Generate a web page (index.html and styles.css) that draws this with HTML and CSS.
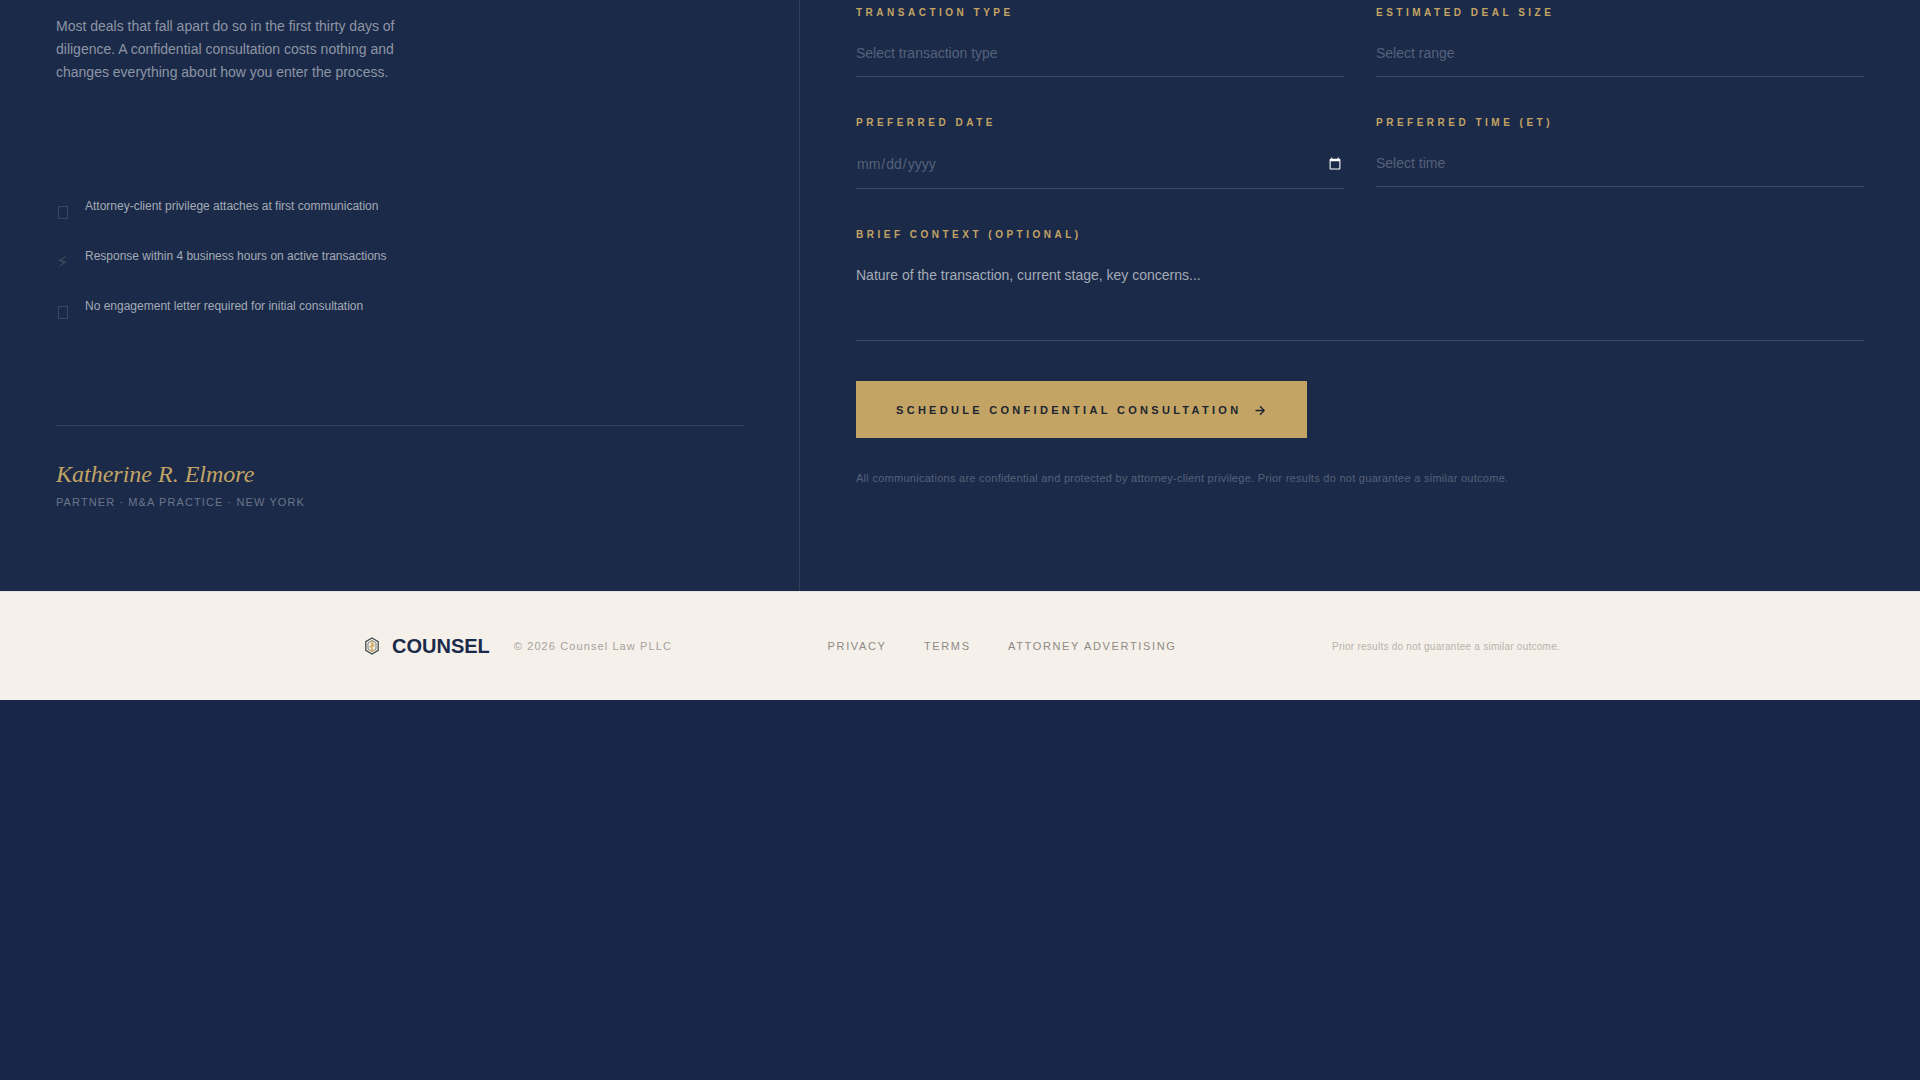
FILE: index.html
```html
<!DOCTYPE html>
<html lang="en">
<head>
    <meta charset="UTF-8">
    <meta name="viewport" content="width=device-width, initial-scale=1.0">
    <title>Counsel</title>
    <link rel="stylesheet" href="styles.css">
</head>
<body>
    <main class="consult">
        <section class="intro">
            <p class="intro-text">Most deals that fall apart do so in the first thirty days of diligence. A confidential consultation costs nothing and changes everything about how you enter the process.</p>
            <ul class="points">
                <li>
                    <svg class="point-icon" viewBox="0 0 14 18" aria-hidden="true"><rect x="2.5" y="3.5" width="9" height="12" /></svg>
                    <span>Attorney-client privilege attaches at first communication</span>
                </li>
                <li>
                    <span class="point-icon bolt" aria-hidden="true">⚡&#xFE0E;</span>
                    <span>Response within 4 business hours on active transactions</span>
                </li>
                <li>
                    <svg class="point-icon" viewBox="0 0 14 18" aria-hidden="true"><rect x="2.5" y="3.5" width="9" height="12" /></svg>
                    <span>No engagement letter required for initial consultation</span>
                </li>
            </ul>
            <div class="signature">
                <p class="sign-name">Katherine R. Elmore</p>
                <p class="sign-role">Partner · M&amp;A Practice · New York</p>
            </div>
        </section>
        <section class="booking">
            <form class="form">
                <div class="field">
                    <label for="type">Transaction Type</label>
                    <select id="type" name="type">
                        <option value="">Select transaction type</option>
                    </select>
                </div>
                <div class="field">
                    <label for="size">Estimated Deal Size</label>
                    <select id="size" name="size">
                        <option value="">Select range</option>
                    </select>
                </div>
                <div class="field">
                    <label for="date">Preferred Date</label>
                    <input type="date" id="date" name="date">
                </div>
                <div class="field">
                    <label for="time">Preferred Time (ET)</label>
                    <select id="time" name="time">
                        <option value="">Select time</option>
                    </select>
                </div>
                <div class="field wide">
                    <label for="context">Brief Context (Optional)</label>
                    <textarea id="context" name="context" placeholder="Nature of the transaction, current stage, key concerns..."></textarea>
                </div>
                <div class="wide">
                    <button type="submit" class="submit">
                        Schedule Confidential Consultation
                        <svg class="arrow" viewBox="0 0 14 14" aria-hidden="true"><path d="M2.500 7.500h8.500M7 3.300l4.200 4.200L7 11.700" /></svg>
                    </button>
                    <p class="note">All communications are confidential and protected by attorney-client privilege. Prior results do not guarantee a similar outcome.</p>
                </div>
            </form>
        </section>
    </main>
    <footer class="footer">
        <div class="footer-inner">
            <div class="brand">
                <svg class="logo" viewBox="0 0 24 20" aria-hidden="true">
                    <path class="logo-hex" d="M12 2l6.200 3.700v8.600L12 18l-6.200-3.700V5.700z" />
                    <path class="logo-inner" d="M12 4.500l4 2.500v6l-4 2.500L8 13V7z" />
                    <path class="logo-mark" d="M12 5v9.500M10 14.500h4M9.500 11l2.500-1 2.500-.5M12 7l1.500 2" />
                </svg>
                <span class="brand-name">COUNSEL</span>
                <span class="copyright">© 2026 Counsel Law PLLC</span>
            </div>
            <nav class="links">
                <a href="#">Privacy</a>
                <span class="dot">·</span>
                <a href="#">Terms</a>
                <span class="dot">·</span>
                <a href="#">Attorney Advertising</a>
            </nav>
            <p class="disclaimer">Prior results do not guarantee a similar outcome.</p>
        </div>
    </footer>
</body>
</html>
```

FILE: styles.css
```css
* {
    box-sizing: border-box;
    margin: 0;
    padding: 0;
}
body {
    background-color: #182648;
    font-family: "Liberation Sans", Arial, sans-serif;
    font-size: 14px;
}
.consult {
    display: grid;
    grid-template-columns: 5fr 7fr;
    background-color: #1b2a49;
}

/* left column */
.intro {
    padding: 15px 55px 81px 56px;
    border-right: 1px solid #313f5c;
}
.intro-text {
    max-width: 340px;
    line-height: 23px;
    color: #8d95a4;
}
.points {
    list-style: none;
    margin-top: 113px;
    display: flex;
    flex-direction: column;
    gap: 26px;
}
.points li {
    display: flex;
    align-items: flex-start;
    gap: 15px;
    height: 24px;
    font-size: 12px;
    line-height: 18px;
    color: #a4aab6;
}
.point-icon {
    flex-shrink: 0;
    width: 14px;
    height: 18px;
    margin-top: 6px;
    fill: none;
    stroke: #3a4662;
}
.bolt {
    font-family: "DejaVu Sans", sans-serif;
    font-size: 18px;
    color: #414b5c;
}
.signature {
    margin-top: 104px;
    padding-top: 32px;
    border-top: 1px solid #313f5c;
}
.sign-name {
    font-family: "Liberation Serif", "Times New Roman", serif;
    font-size: 24px;
    font-style: italic;
    line-height: 32px;
    color: #c4a464;
}
.sign-role {
    margin-top: 4px;
    font-size: 11px;
    line-height: 16px;
    letter-spacing: 0.1em;
    text-transform: uppercase;
    color: #6b758a;
}

/* form */
.booking {
    padding: 7px 56px 80px;
}
.form {
    display: grid;
    grid-template-columns: 1fr 1fr;
    gap: 40px 32px;
    align-items: start;
}
.wide {
    grid-column: 1 / -1;
}
.field {
    display: flex;
    flex-direction: column;
    gap: 14px;
}
.field label {
    font-size: 10px;
    font-weight: bold;
    line-height: 12px;
    letter-spacing: 0.35em;
    text-transform: uppercase;
    color: #c4a464;
}
.field select,
.field input,
.field textarea {
    appearance: none;
    width: 100%;
    padding: 12px 0 15px;
    border: 0;
    border-bottom: 1px solid #3d4a65;
    border-radius: 0;
    outline: 0;
    background: transparent;
    font-family: inherit;
    font-size: 14px;
    color: #56617a;
}
.field input {
    color-scheme: dark;
}
.field textarea {
    display: block;
    height: 86px;
    resize: none;
}
.field textarea::placeholder {
    color: #a4aab6;
}
.submit {
    display: inline-flex;
    align-items: center;
    gap: 12px;
    height: 57px;
    padding: 0 40px;
    border: 0;
    background-color: #c4a464;
    font-family: inherit;
    font-size: 11px;
    font-weight: bold;
    letter-spacing: 0.3em;
    text-transform: uppercase;
    color: #1b2430;
    cursor: pointer;
}
.arrow {
    width: 14px;
    height: 14px;
    fill: none;
    stroke: #1b2430;
    stroke-width: 1.3;
}
.note {
    margin-top: 32px;
    font-size: 11px;
    line-height: 16px;
    letter-spacing: 0.025em;
    color: #56617a;
}

/* footer */
.footer {
    padding: 40px 56px;
    border-top: 1px solid #e6e2e0;
    background-color: #f5f0ea;
}
.footer-inner {
    display: flex;
    align-items: center;
    justify-content: space-between;
    max-width: 1200px;
    min-height: 28px;
    margin: 0 auto;
}
.brand {
    display: flex;
    align-items: center;
}
.logo {
    width: 24px;
    height: 20px;
    fill: none;
}
.logo-hex {
    stroke: #454d50;
    stroke-width: 1.3;
}
.logo-inner {
    stroke: #7b7f7c;
    stroke-width: 1;
}
.logo-mark {
    stroke: #d0ac62;
    stroke-width: 1.5;
}
.brand-name {
    margin-left: 8px;
    font-size: 20px;
    font-weight: bold;
    color: #1b2a4a;
}
.copyright {
    margin-left: 24px;
    font-size: 11px;
    letter-spacing: 0.1em;
    color: #a5a19c;
}
.links {
    display: flex;
    align-items: center;
    gap: 16px;
    font-size: 11px;
    letter-spacing: 0.15em;
}
.links a {
    text-decoration: none;
    text-transform: uppercase;
    color: #8e8a85;
}
.dot {
    color: #e6e1db;
}
.disclaimer {
    font-size: 10px;
    letter-spacing: 0.025em;
    color: #b8b3ad;
}
```
